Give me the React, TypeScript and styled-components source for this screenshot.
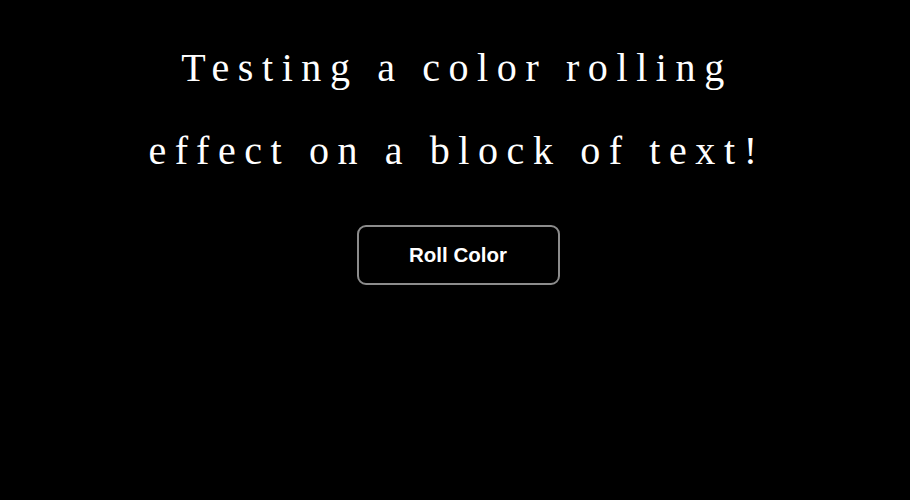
import styled, { createGlobalStyle } from "styled-components";

const GlobalStyle = createGlobalStyle`
  html, body {
    margin: 0;
    padding: 0;
    background: #000;
  }
  body {
    width: 910px;
    height: 500px;
    overflow: hidden;
  }
`;

const Page = styled.div`
  display: flex;
  flex-direction: column;
  align-items: center;
  padding-top: 26px;
`;

const Headline = styled.h1`
  margin: 0 0 0 4px;
  text-align: center;
  white-space: nowrap;
  font-family: "Liberation Serif", "Times New Roman", serif;
  font-weight: 400;
  font-size: 40px;
  line-height: 83px;
  letter-spacing: 8.6px;
  color: #fff;
`;

const RollButton = styled.button`
  margin: 33px 0 0 6px;
  width: 203px;
  height: 60px;
  background: #000;
  color: #fff;
  border: 2px solid #8c8c8c;
  border-radius: 9px;
  font-family: "Liberation Sans", Arial, sans-serif;
  font-weight: 700;
  font-size: 20.5px;
  cursor: pointer;
`;

export default function App() {
  return (
    <>
      <GlobalStyle />
      <Page>
        <Headline>
          Testing a color rolling
          <br />
          effect on a block of text!
        </Headline>
        <RollButton>Roll Color</RollButton>
      </Page>
    </>
  );
}
